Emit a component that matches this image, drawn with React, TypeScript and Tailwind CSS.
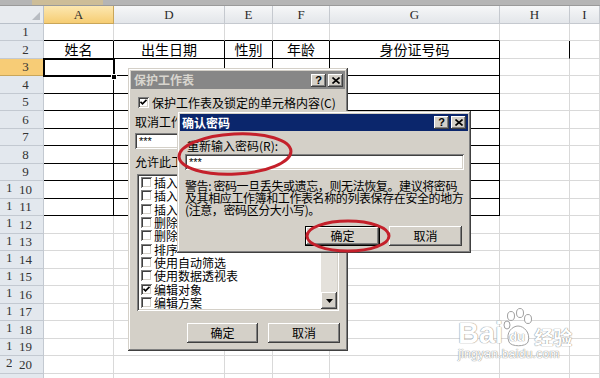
import React from "react";

const cols = [
  { l: "A", w: 70 },
  { l: "D", w: 111 },
  { l: "E", w: 48 },
  { l: "F", w: 57 },
  { l: "G", w: 170 },
  { l: "H", w: 70 },
  { l: "I", w: 30 },
];

const header2: Record<number, string> = { 0: "姓名", 1: "出生日期", 2: "性别", 3: "年龄", 4: "身份证号码" };

const rows = Array.from({ length: 21 }, (_, i) => i + 1);

const raised =
  "shadow-[inset_-1px_-1px_0_#404040,inset_1px_1px_0_#fff,inset_-2px_-2px_0_#808080]";
const sunken =
  "shadow-[inset_1px_1px_0_#808080,inset_-1px_-1px_0_#fff,inset_2px_2px_0_#404040,inset_-2px_-2px_0_#d4d0c8]";
const win =
  "shadow-[inset_-1px_-1px_0_#404040,inset_1px_1px_0_#d4d0c8,inset_-2px_-2px_0_#808080,inset_2px_2px_0_#fff]";

function CB({ checked }: { checked?: boolean }) {
  return (
    <span className={`w-[11px] h-[11px] bg-white ${sunken} flex items-center justify-center shrink-0`}>
      {checked && (
        <svg width="7" height="7" viewBox="0 0 7 7">
          <polyline points="0.5,2.8 2.5,4.8 6.5,0.8" fill="none" stroke="#000" strokeWidth="1.7" />
        </svg>
      )}
    </span>
  );
}

function TBtn({ kind }: { kind: "q" | "x" }) {
  return (
    <span className={`w-[15px] h-[13px] bg-[#d4d0c8] ${raised} flex items-center justify-center`}>
      {kind === "q" ? (
        <span className="text-[11px] leading-none font-bold text-black font-['Liberation_Sans',sans-serif]">?</span>
      ) : (
        <svg width="8" height="7" viewBox="0 0 8 7">
          <path d="M0.5 0.5 L7.5 6.5 M7.5 0.5 L0.5 6.5" stroke="#000" strokeWidth="1.6" />
        </svg>
      )}
    </span>
  );
}

function Btn({ label, def, w }: { label: string; def?: boolean; w: string }) {
  return (
    <div className={`${w} h-[20px] ${def ? "border border-black" : ""} flex`}>
      <div className={`flex-1 bg-[#d4d0c8] ${raised} flex items-center justify-center text-[12px]`}>{label}</div>
    </div>
  );
}

const listItems = [
  { t: "插入列" },
  { t: "插入行" },
  { t: "插入超链接" },
  { t: "删除列" },
  { t: "删除行" },
  { t: "排序" },
  { t: "使用自动筛选" },
  { t: "使用数据透视表" },
  { t: "编辑对象", c: true },
  { t: "编辑方案" },
];

export default function App() {
  return (
    <div className="w-[600px] h-[378px] overflow-hidden relative bg-white font-['Noto_Sans_CJK_SC',sans-serif]">
      {/* top strip */}
      <div className="h-[6px] bg-[#b5b5b5] border-b border-[#9a9a9a] flex">
        <div className="w-[32px]" />
        <div className="w-[71px] bg-[#cdbd98]" />
      </div>
      {/* column header */}
      <div className="flex h-[18px]">
        <div className="w-[44px] shrink-0 bg-[#e8ebef] border-r border-b border-[#b9c0c9] relative flex items-end justify-end pr-[3px] pb-[3px]">
          <svg width="8" height="8" viewBox="0 0 8 8">
            <polygon points="8,0 8,8 0,8" fill="#b8bcc2" />
          </svg>
        </div>
        {cols.map((c, i) => (
          <div
            key={c.l}
            style={{ width: c.w }}
            className={`shrink-0 border-r border-b flex items-center justify-center text-[13px] text-[#2b2b2b] font-['Liberation_Serif',serif] ${
              i === 0
                ? "bg-gradient-to-b from-[#fce7b0] to-[#f6cd72] border-[#c9a65a]"
                : "bg-gradient-to-b from-[#f6f7f8] to-[#e3e6ea] border-[#c5c9cf]"
            }`}
          >
            {c.l}
          </div>
        ))}
      </div>
      {/* rows */}
      {rows.map((r) => (
        <div key={r} className={`flex ${r % 2 === 1 ? "h-[17px]" : "h-[18px]"}`}>
          <div
            className={`w-[44px] shrink-0 flex border-r border-b ${
              r === 3 ? "bg-[#f7cc76] border-[#c9a65a]" : "bg-[#e3e8ee] border-[#c3c9d1]"
            }`}
          >
            <div className="w-[12px] text-[13px] leading-[13px] text-[#333] font-['Liberation_Serif',serif] pl-[6px] overflow-hidden">
              {r >= 10 && r <= 20 ? String(r)[0] : ""}
            </div>
            <div className="flex-1 flex items-center justify-center pr-[4px] text-[13px] text-[#333] font-['Liberation_Serif',serif]">
              {r}
            </div>
          </div>
          {cols.map((c, i) => {
            const inTable = i <= 4;
            const blackB = inTable && r >= 1 && r <= 11;
            const blackR = (inTable && r >= 2 && r <= 11) || (i === 5 && r === 2);
            return (
              <div
                key={c.l}
                style={{ width: c.w }}
                className={`shrink-0 border-r border-b flex items-center justify-center text-[14px] text-black ${
                  blackB ? "border-b-black" : "border-b-[#d9d9d9]"
                } ${blackR ? "border-r-black" : "border-r-[#d9d9d9]"}`}
              >
                {r === 2 ? header2[i] ?? "" : ""}
              </div>
            );
          })}
        </div>
      ))}

      {/* selected cell A3 */}
      <div className="absolute left-[43px] top-[58px] w-[72px] h-[19px] border-2 border-black" />
      <div className="absolute left-[111px] top-[74px] w-[6px] h-[6px] bg-black border border-white" />

      {/* Baidu watermark */}
      <div className="absolute left-[458px] top-[306px] flex flex-col items-start text-white [text-shadow:0_0_1px_#8a8a8a,0_0_1px_#8a8a8a]">
        <div className="flex items-end h-[42px]">
          <span className="text-[29px] leading-[30px] font-bold font-['Liberation_Sans',sans-serif]">Bai</span>
          <div className="relative w-[30px] h-[40px]">
            <svg width="30" height="40" viewBox="0 0 30 40" className="absolute left-0 top-0">
              <g fill="#fff" stroke="#a0a0a0" strokeWidth="1">
                <ellipse cx="8" cy="8" rx="3.5" ry="4.5" />
                <ellipse cx="17" cy="5" rx="3.5" ry="4.5" />
                <ellipse cx="25" cy="11" rx="3.5" ry="4.5" />
                <ellipse cx="4" cy="17" rx="3" ry="4" />
                <path d="M6 34 C2 24 10 18 15 18 C21 18 28 25 25 34 C23 39 8 39 6 34 Z" />
              </g>
            </svg>
            <span className="absolute left-[6px] top-[22px] text-[13px] leading-[13px] font-bold text-white font-['Liberation_Sans',sans-serif]">du</span>
          </div>
          <span className="text-[19px] leading-[22px] font-bold ml-[1px]">经验</span>
        </div>
        <span className="text-[12px] leading-[13px] font-['Liberation_Sans',sans-serif] tracking-[0.3px]">jingyan.baidu.com</span>
      </div>

      {/* Dialog 1: 保护工作表 */}
      <div className={`absolute left-[128px] top-[68px] w-[220px] h-[283px] bg-[#d4d0c8] ${win} p-[3px] flex flex-col text-[12px] text-black`}>
        <div className="h-[18px] bg-[#878787] flex items-center justify-between pl-[3px] pr-[2px]">
          <span className="font-bold text-[12px] text-[#d8d5ce]">保护工作表</span>
          <div className="flex gap-[2px]">
            <TBtn kind="q" />
            <TBtn kind="x" />
          </div>
        </div>
        <div className="pl-[4px] flex flex-col">
          <div className="mt-[7px] h-[13px] flex items-center gap-[3px] ml-[3px]">
            <CB checked />
            <span className="whitespace-nowrap leading-[13px]">保护工作表及锁定的单元格内容(C)</span>
          </div>
          <div className="mt-[6px] h-[14px] leading-[14px] whitespace-nowrap">取消工作表保护时使用的密码(P):</div>
          <div className={`mt-[4px] h-[16px] w-[204px] bg-white ${sunken} flex items-center pl-[4px] text-[11px] leading-none font-['Liberation_Sans',sans-serif]`}>
            ***
          </div>
          <div className="mt-[6px] h-[14px] leading-[14px] whitespace-nowrap">允许此工作表的所有用户进行(O):</div>
          <div className={`mt-[5px] ml-[2px] h-[137px] w-[202px] bg-white ${sunken} p-[2px] flex`}>
            <div className="flex-1 flex flex-col pt-[0px]">
              {listItems.map((it) => (
                <div key={it.t} className="h-[13.5px] flex items-center gap-[2px] pl-[2px]">
                  <CB checked={it.c} />
                  <span className="leading-[13px] whitespace-nowrap">{it.t}</span>
                </div>
              ))}
            </div>
            <div className="w-[16px] flex flex-col bg-[#e4e1db]">
              <div className={`h-[16px] bg-[#d4d0c8] ${raised} flex items-center justify-center`}>
                <svg width="7" height="4" viewBox="0 0 7 4">
                  <polygon points="0,4 7,4 3.5,0" fill="#000" />
                </svg>
              </div>
              <div className={`h-[30px] bg-[#d4d0c8] ${raised}`} />
              <div className="flex-1" />
              <div className={`h-[17px] bg-[#d4d0c8] ${raised} flex items-center justify-center`}>
                <svg width="7" height="4" viewBox="0 0 7 4">
                  <polygon points="0,0 7,0 3.5,4" fill="#000" />
                </svg>
              </div>
            </div>
          </div>
          <div className="mt-[12px] flex justify-end gap-[10px] pr-[5px]">
            <Btn label="确定" w="w-[71px]" />
            <Btn label="取消" w="w-[72px]" />
          </div>
        </div>
      </div>

      {/* Dialog 2: 确认密码 */}
      <div className={`absolute left-[177px] top-[111px] w-[294px] h-[142px] bg-[#d4d0c8] ${win} p-[3px] flex flex-col text-[12px] text-black`}>
        <div className="h-[17px] bg-[#0b266c] flex items-center justify-between pl-[2px] pr-[2px]">
          <span className="font-bold text-[12px] text-white">确认密码</span>
          <div className="flex gap-[2px]">
            <TBtn kind="q" />
            <TBtn kind="x" />
          </div>
        </div>
        <div className="pl-[5px] pr-[4px] flex flex-col">
          <div className="mt-[8px] ml-[2px] h-[14px] leading-[14px] whitespace-nowrap">重新输入密码(R):</div>
          <div className={`mt-[1px] h-[16px] w-[279px] bg-white ${sunken} flex items-center pl-[4px] text-[11px] leading-none font-['Liberation_Sans',sans-serif]`}>
            ***
          </div>
          <div className="mt-[10px] text-[12px] leading-[12px] tracking-[-0.4px] whitespace-nowrap">
            <div>警告: 密码一旦丢失或遗忘，则无法恢复。建议将密码</div>
            <div>及其相应工作簿和工作表名称的列表保存在安全的地方</div>
            <div>(注意，密码区分大小写)。</div>
          </div>
          <div className="mt-[10px] flex justify-end gap-[9px] pr-[2px]">
            <Btn label="确定" def w="w-[75px]" />
            <Btn label="取消" w="w-[73px]" />
          </div>
        </div>
      </div>

      {/* red ellipses */}
      <svg className="absolute left-0 top-0 pointer-events-none" width="600" height="378" viewBox="0 0 600 378">
        <ellipse cx="235" cy="154" rx="56" ry="20" fill="none" stroke="#c4202b" strokeWidth="3" transform="rotate(-3 235 154)" />
        <ellipse cx="348" cy="236" rx="41" ry="15" fill="none" stroke="#c4202b" strokeWidth="3" />
      </svg>
    </div>
  );
}
